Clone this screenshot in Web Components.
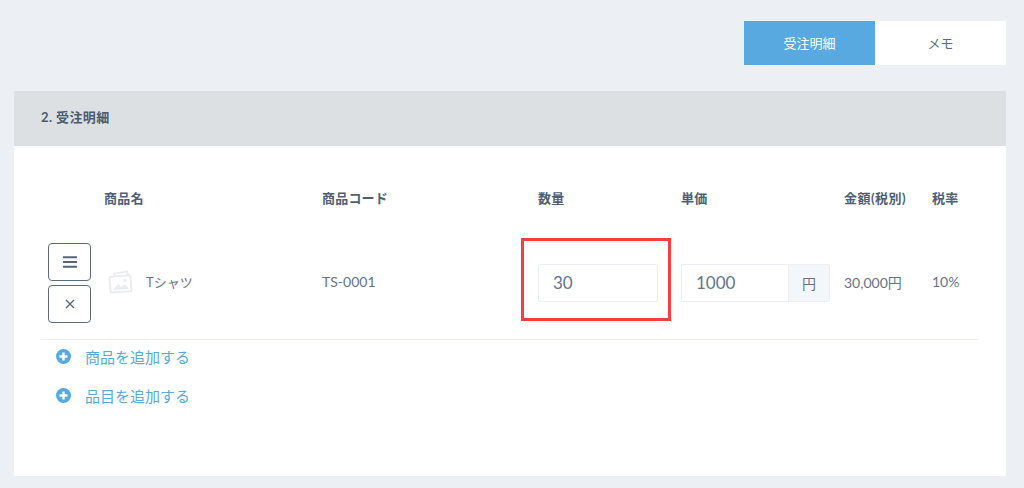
<!DOCTYPE html>
<html lang="ja">
<head>
<meta charset="utf-8">
<title>受注明細</title>
<style>
    html, body {
        margin: 0;
        height: 100%;
        overflow: hidden;
        background: #ecf0f5;
        font-family: Lato, "Noto Sans CJK JP", sans-serif;
        color: #5b6b7e;
    }
</style>
</head>
<body>
<order-page>
    <tab-bar slot="tabs">
        <tab-button active>受注明細</tab-button>
        <tab-button>メモ</tab-button>
    </tab-bar>
    <order-panel heading="2. 受注明細">
        <order-table>
            <order-row></order-row>
        </order-table>
        <add-link>商品を追加する</add-link>
        <add-link>品目を追加する</add-link>
    </order-panel>
</order-page>

<script>
class OrderPage extends HTMLElement {
    constructor() {
        super();
        this.attachShadow({ mode: 'open' });
        this.shadowRoot.innerHTML = `
            <style>
                :host {
                    display: flex;
                    flex-direction: column;
                    gap: 26px;
                    padding: 21px 18px 0 14px;
                }
            </style>
            <slot name="tabs"></slot>
            <slot></slot>
        `;
    }
}

class TabBar extends HTMLElement {
    constructor() {
        super();
        this.attachShadow({ mode: 'open' });
        this.shadowRoot.innerHTML = `
            <style>
                :host {
                    display: flex;
                    justify-content: flex-end;
                }
            </style>
            <slot></slot>
        `;
    }
}

class TabButton extends HTMLElement {
    constructor() {
        super();
        this.attachShadow({ mode: 'open' });
        this.shadowRoot.innerHTML = `
            <style>
                :host {
                    display: grid;
                    place-content: center;
                    width: 131px;
                    height: 44px;
                    box-sizing: border-box;
                    padding-bottom: 2px;
                    background: #fff;
                    font-size: 13px;
                    color: #5b6b7e;
                }
                :host([active]) {
                    background: #57a9e0;
                    color: #fff;
                }
            </style>
            <slot></slot>
        `;
    }
}

class OrderPanel extends HTMLElement {
    constructor() {
        super();
        this.attachShadow({ mode: 'open' });
        this.shadowRoot.innerHTML = `
            <style>
                :host {
                    display: block;
                    background: #fff;
                    height: 385px;
                }
                h2 {
                    margin: 0;
                    height: 55px;
                    box-sizing: border-box;
                    padding: 0 0 5px 27px;
                    display: flex;
                    align-items: center;
                    background: #dce0e3;
                    font-size: 13px;
                    font-weight: 700;
                    letter-spacing: 0.4px;
                    color: #4a5c72;
                }
                .body {
                    padding: 39px 27px 0;
                }
            </style>
            <h2></h2>
            <div class="body"><slot></slot></div>
        `;
    }

    connectedCallback() {
        this.shadowRoot.querySelector('h2').textContent = this.getAttribute('heading');
    }
}

const rowColumns = '63px 218px 216px 143px 163px 88px 47px';

class OrderTable extends HTMLElement {
    constructor() {
        super();
        this.attachShadow({ mode: 'open' });
        this.shadowRoot.innerHTML = `
            <style>
                :host {
                    display: block;
                    margin-bottom: -3px;
                }
                .head {
                    display: grid;
                    grid-template-columns: ${rowColumns};
                    height: 28px;
                    box-sizing: border-box;
                    padding-bottom: 4px;
                    align-items: center;
                    font-size: 13px;
                    font-weight: 700;
                    letter-spacing: 0.2px;
                    color: #4f6075;
                }
                .amount {
                    letter-spacing: 0.5px;
                }
            </style>
            <div class="head">
                <span></span>
                <span>商品名</span>
                <span>商品コード</span>
                <span>数量</span>
                <span>単価</span>
                <span class="amount">金額(税別)</span>
                <span>税率</span>
            </div>
            <slot></slot>
        `;
    }
}

class OrderRow extends HTMLElement {
    constructor() {
        super();
        this.attachShadow({ mode: 'open' });
        this.shadowRoot.innerHTML = `
            <style>
                :host {
                    display: grid;
                    grid-template-columns: ${rowColumns};
                    align-items: center;
                    height: 127px;
                    box-sizing: border-box;
                    padding-top: 15px;
                    border-bottom: 1px solid #ebeff5;
                    font-size: 14px;
                    color: #64748a;
                }
                .actions {
                    display: flex;
                    flex-direction: column;
                    gap: 4px;
                    padding-left: 7px;
                    margin-top: -2px;
                }
                button {
                    width: 43px;
                    height: 38px;
                    padding: 0;
                    display: grid;
                    place-content: center;
                    background: #fff;
                    border: 1px solid #5b6b7e;
                    border-radius: 4px;
                }
                .name {
                    display: flex;
                    align-items: center;
                    gap: 13px;
                    margin-left: 4px;
                    margin-top: -4px;
                    font-size: 13px;
                }
                .mid {
                    margin-top: -4px;
                }
                .qty {
                    position: relative;
                    margin-top: -1px;
                }
                .box {
                    box-sizing: border-box;
                    height: 38px;
                    padding: 0 0 2px 14px;
                    border: 1px solid #ebeff5;
                    border-radius: 2px;
                    display: flex;
                    align-items: center;
                    font-size: 17px;
                }
                .qty .box {
                    width: 120px;
                }
                .highlight {
                    position: absolute;
                    left: -17px;
                    top: -26px;
                    width: 150px;
                    height: 83px;
                    box-sizing: border-box;
                    border: 3px solid #f5403f;
                }
                .price {
                    display: flex;
                    width: 149px;
                    margin-top: -1px;
                }
                .price .box {
                    flex: 1;
                    border-right: 0;
                    border-radius: 2px 0 0 2px;
                }
                .unit {
                    width: 42px;
                    height: 38px;
                    box-sizing: border-box;
                    display: grid;
                    place-content: center;
                    background: #f4f7fa;
                    border: 1px solid #ebeff5;
                    border-radius: 0 2px 2px 0;
                    font-size: 14px;
                }
            </style>
            <div class="actions">
                <button aria-label="並べ替え">
                    <svg width="14" height="12" viewBox="0 0 14 12"><path d="M0 1.200h14M0 6h14M0 10.800h14" stroke="#55657a" stroke-width="2"/></svg>
                </button>
                <button aria-label="削除">
                    <svg width="10" height="10" viewBox="0 0 10 10"><path d="M1 1l8 8M9 1l-8 8" stroke="#55657a" stroke-width="1.300"/></svg>
                </button>
            </div>
            <div class="name">
                <svg width="25" height="25" viewBox="0 0 25 25" fill="none">
                    <path d="M5 5L19 2.500l1.200 4" stroke="#eceef0" stroke-width="2"/>
                    <rect x="2" y="7" width="21" height="16" rx="1" transform="rotate(-4 12 15)" stroke="#eaecee" stroke-width="2" fill="#fff"/>
                    <path d="M5 21l5-6 3.500 3 3-3 4.500 5z" fill="#eaecee"/>
                    <circle cx="17" cy="11.500" r="1.500" fill="#eaecee"/>
                </svg>
                <span>Tシャツ</span>
            </div>
            <div class="mid">TS-0001</div>
            <div class="qty">
                <div class="box">30</div>
                <div class="highlight"></div>
            </div>
            <div class="price">
                <div class="box">1000</div>
                <div class="unit">円</div>
            </div>
            <div class="mid">30,000円</div>
            <div class="mid">10%</div>
        `;
    }
}

class AddLink extends HTMLElement {
    constructor() {
        super();
        this.attachShadow({ mode: 'open' });
        this.shadowRoot.innerHTML = `
            <style>
                :host {
                    display: flex;
                    align-items: center;
                    gap: 14px;
                    height: 39px;
                    padding-left: 15px;
                    font-size: 15px;
                    color: #57a9e0;
                }
            </style>
            <svg width="15" height="15" viewBox="0 0 15 15">
                <circle cx="7.500" cy="7.500" r="7.500" fill="#57a9e0"/>
                <path d="M7.500 3.500v8M3.500 7.500h8" stroke="#fff" stroke-width="2.400"/>
            </svg>
            <span><slot></slot></span>
        `;
    }
}

customElements.define('order-page', OrderPage);
customElements.define('tab-bar', TabBar);
customElements.define('tab-button', TabButton);
customElements.define('order-panel', OrderPanel);
customElements.define('order-table', OrderTable);
customElements.define('order-row', OrderRow);
customElements.define('add-link', AddLink);
</script>
</body>
</html>
